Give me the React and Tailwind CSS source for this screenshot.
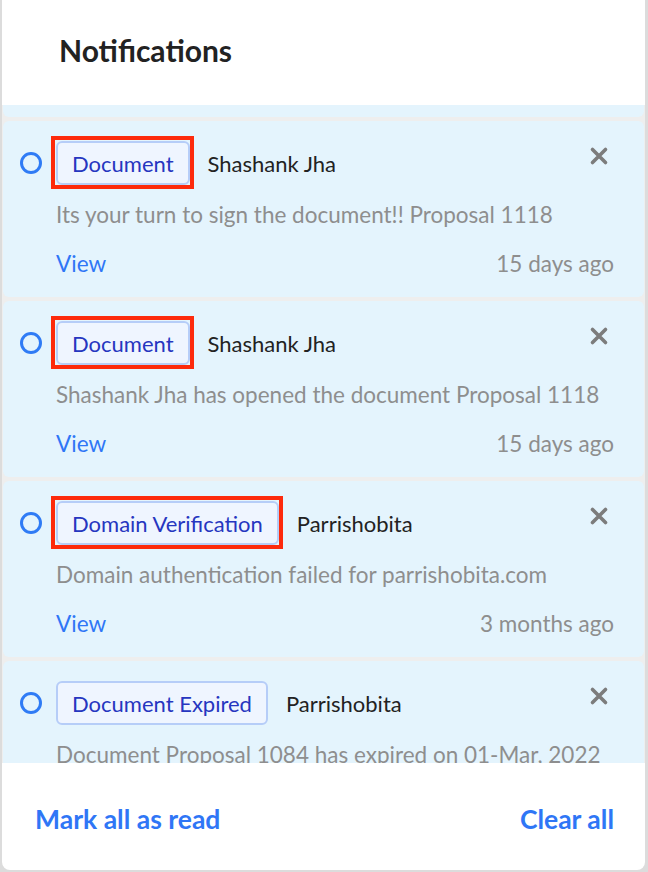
import React from 'react';

const notifications = [
  {
    tag: 'Document',
    name: 'Shashank Jha',
    message: 'Its your turn to sign the document!! Proposal 1118',
    time: '15 days ago',
    marked: true,
  },
  {
    tag: 'Document',
    name: 'Shashank Jha',
    message: 'Shashank Jha has opened the document Proposal 1118',
    time: '15 days ago',
    marked: true,
  },
  {
    tag: 'Domain Verification',
    name: 'Parrishobita',
    message: 'Domain authentication failed for parrishobita.com',
    time: '3 months ago',
    marked: true,
  },
  {
    tag: 'Document Expired',
    name: 'Parrishobita',
    message: 'Document Proposal 1084 has expired on 01-Mar, 2022',
    time: '3 months ago',
    marked: false,
  },
];

const CloseIcon = () => (
  <svg width="20" height="20" viewBox="0 0 20 20" fill="none">
    <path d="M3.5 3.5l13 13M16.5 3.5l-13 13" stroke="#7c7c7c" strokeWidth="3.6" strokeLinecap="round" />
  </svg>
);

const NotificationCard = ({ item }) => (
  <div className="h-[176px] shrink-0 rounded-md bg-[#e4f4fd] pl-[17px] pr-[30px] pt-[20px]">
    <div className="flex items-center">
      <span className="h-[22px] w-[22px] shrink-0 rounded-full border-[3.5px] border-[#2f7bf5]" />
      <div className="relative ml-[14px]">
        <span className="flex h-[44px] items-center rounded-md border-2 border-[#b6cdf8] bg-[#eff5ff] px-[14px] text-[22px] text-[#2636c0]">
          {item.tag}
        </span>
        {item.marked && (
          <span className="absolute -bottom-[4px] -left-[5px] -right-[4px] -top-[5px] border-4 border-[#fd2a0c]" />
        )}
      </div>
      <span className="ml-[18px] text-[22px] text-[#222]">{item.name}</span>
      <button className="ml-auto -mt-[14px] mr-[5px]">
        <CloseIcon />
      </button>
    </div>
    <p className="mt-[12px] pl-[36px] text-[22.5px] leading-[36px] text-[#8e8e8e] whitespace-nowrap">{item.message}</p>
    <div className="mt-[13px] flex items-center justify-between pl-[36px] text-[22.5px] leading-[36px]">
      <span className="text-[#2f76f6]">View</span>
      <span className="text-[#8e8e8e]">{item.time}</span>
    </div>
  </div>
);

export default function App() {
  return (
    <div className="flex h-[872px] justify-center bg-[#dcdcdc] px-[2px] pr-[3px] font-['Lato',sans-serif]">
      <div className="flex h-[870px] w-full flex-col overflow-hidden rounded-b-lg bg-white">
        <div className="flex h-[105px] shrink-0 items-center pb-[6px] pl-[57px]">
          <h1 className="text-[30px] font-bold leading-[36px] text-[#222]">Notifications</h1>
        </div>
        <div className="flex h-[658px] shrink-0 flex-col gap-[4px] overflow-hidden bg-[#eeeeee] px-[1px]">
          <div className="h-[12px] shrink-0 rounded-b-md bg-[#e4f4fd]" />
          {notifications.map((item, i) => (
            <NotificationCard key={i} item={item} />
          ))}
        </div>
        <div className="flex flex-1 items-center justify-between pl-[33px] pr-[31px] pt-[4px]">
          <button className="text-[26.5px] font-bold leading-[36px] text-[#2f76f6]">Mark all as read</button>
          <button className="text-[26.5px] font-bold leading-[36px] text-[#2f76f6]">Clear all</button>
        </div>
      </div>
    </div>
  );
}
